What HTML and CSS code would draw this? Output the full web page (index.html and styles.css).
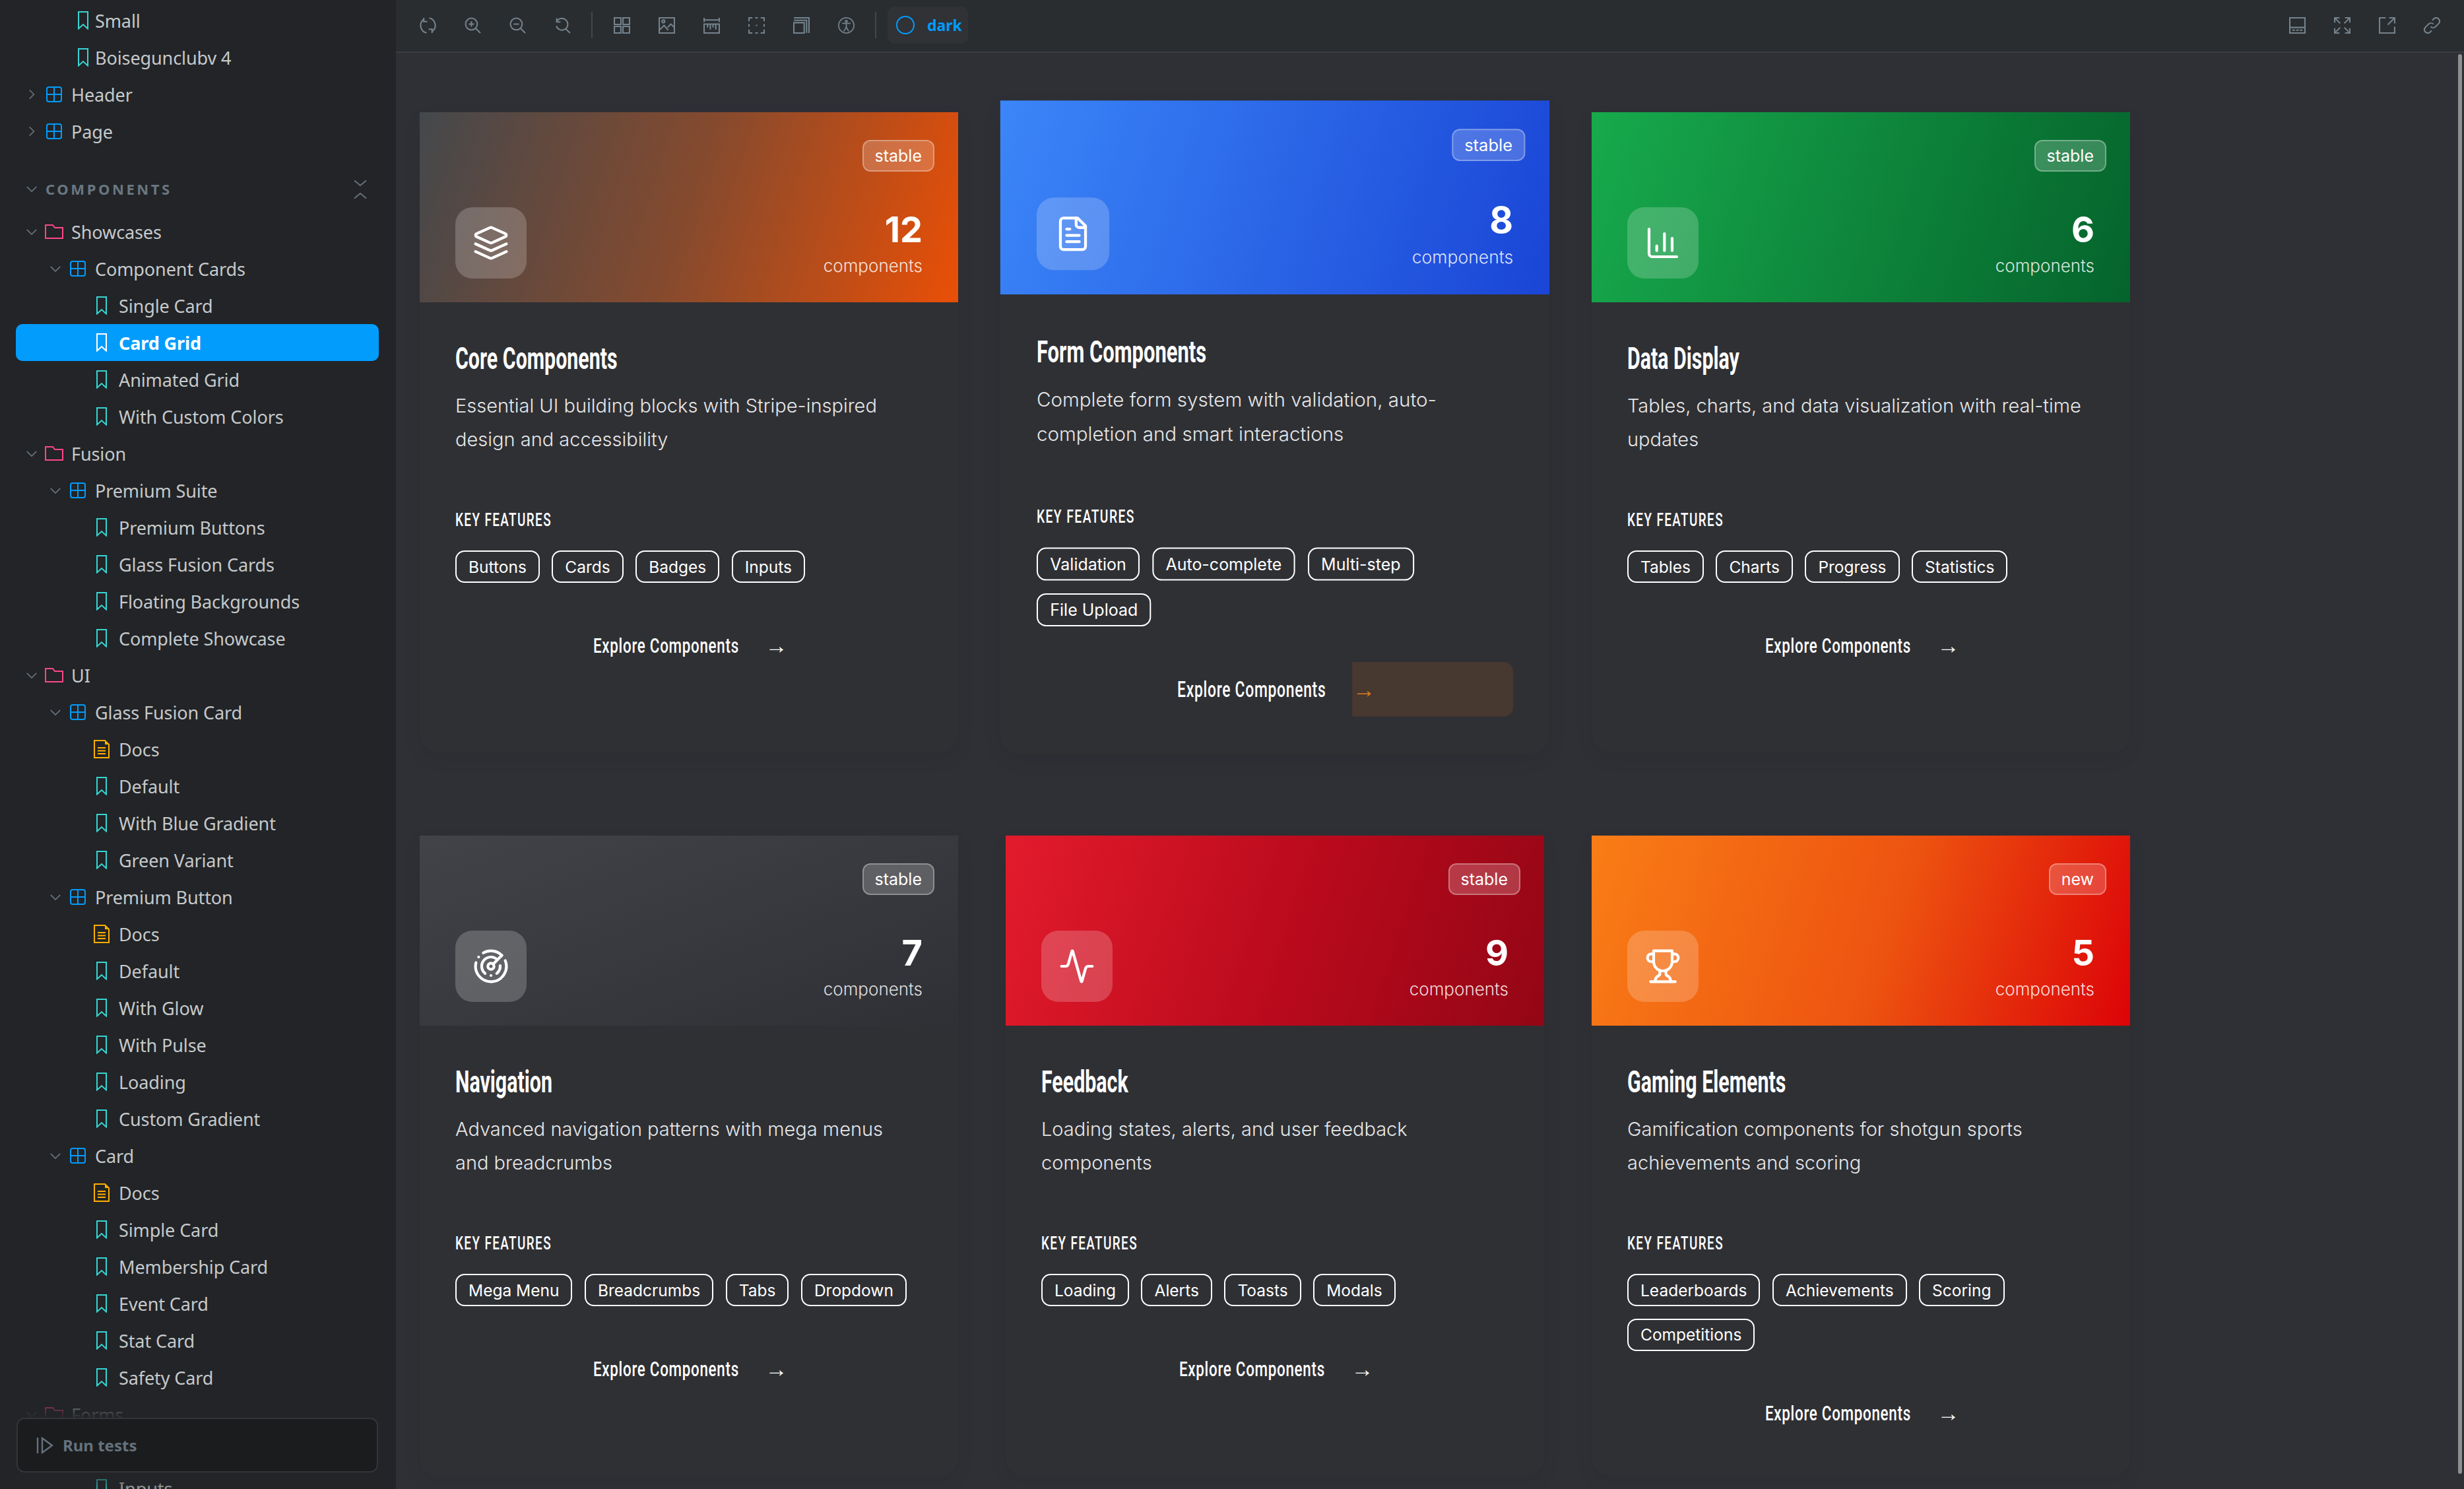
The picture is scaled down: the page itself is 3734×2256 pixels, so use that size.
FILE: index.html
```html
<!DOCTYPE html>
<html lang="en">
<head>
<meta charset="utf-8">
<title>Component Cards / Card Grid</title>
<link rel="stylesheet" href="styles.css">
</head>
<body>
<svg class="defs" aria-hidden="true">
  <symbol id="bm" viewBox="0 0 16 28"><path d="M1 1H15V26.500L8 20L1 26.500Z" fill="none" stroke="currentColor" stroke-width="2"/></symbol>
  <symbol id="cmp" viewBox="0 0 24 24"><path d="M4 1H20Q23 1 23 4V20Q23 23 20 23H4Q1 23 1 20V4Q1 1 4 1ZM12 1V23M1 12H23" fill="none" stroke="currentColor" stroke-width="2"/></symbol>
  <symbol id="fld" viewBox="0 0 28 22"><path d="M1 1H12L15 5H27V21H1Z" fill="none" stroke="currentColor" stroke-width="2"/></symbol>
  <symbol id="doc" viewBox="0 0 24 28"><path d="M1 1H17L23 7V27H1Z" fill="none" stroke="currentColor" stroke-width="2"/><path d="M17 1L23 7H17Z" fill="currentColor"/><path d="M6 12H18M6 16.500H18M6 21H18" fill="none" stroke="currentColor" stroke-width="2"/></symbol>
  <symbol id="chr" viewBox="0 0 12 20"><path d="M2 2L10 10L2 18" fill="none" stroke="currentColor" stroke-width="2"/></symbol>
  <symbol id="chd" viewBox="0 0 20 12"><path d="M2 2L10 10L18 2" fill="none" stroke="currentColor" stroke-width="2"/></symbol>
</svg>
<div class="app">
  <aside class="sidebar">
    <div class="tree">
      <div class="row d1"><svg class="ic bm"><use href="#bm"/></svg><span>Small</span></div>
      <div class="row d1"><svg class="ic bm"><use href="#bm"/></svg><span>Boisegunclubv 4</span></div>
      <div class="row d0"><svg class="chev-r"><use href="#chr"/></svg><svg class="ic cmp"><use href="#cmp"/></svg><span>Header</span></div>
      <div class="row d0"><svg class="chev-r"><use href="#chr"/></svg><svg class="ic cmp"><use href="#cmp"/></svg><span>Page</span></div>
      <div class="section">
        <svg class="chev-d"><use href="#chd"/></svg><span class="section-name">COMPONENTS</span>
        <svg class="expand" viewBox="0 0 20 30"><path d="M1 1.500L10 9L19 1.500M1 28.500L10 21L19 28.500" fill="none" stroke="currentColor" stroke-width="2"/></svg>
      </div>
      <div class="row d0"><svg class="chev-d"><use href="#chd"/></svg><svg class="ic fld"><use href="#fld"/></svg><span>Showcases</span></div>
      <div class="row d1"><svg class="chev-d"><use href="#chd"/></svg><svg class="ic cmp"><use href="#cmp"/></svg><span>Component Cards</span></div>
      <div class="row d2"><svg class="ic bm"><use href="#bm"/></svg><span>Single Card</span></div>
      <div class="row d2 active"><svg class="ic bm"><use href="#bm"/></svg><span>Card Grid</span></div>
      <div class="row d2"><svg class="ic bm"><use href="#bm"/></svg><span>Animated Grid</span></div>
      <div class="row d2"><svg class="ic bm"><use href="#bm"/></svg><span>With Custom Colors</span></div>
      <div class="row d0"><svg class="chev-d"><use href="#chd"/></svg><svg class="ic fld"><use href="#fld"/></svg><span>Fusion</span></div>
      <div class="row d1"><svg class="chev-d"><use href="#chd"/></svg><svg class="ic cmp"><use href="#cmp"/></svg><span>Premium Suite</span></div>
      <div class="row d2"><svg class="ic bm"><use href="#bm"/></svg><span>Premium Buttons</span></div>
      <div class="row d2"><svg class="ic bm"><use href="#bm"/></svg><span>Glass Fusion Cards</span></div>
      <div class="row d2"><svg class="ic bm"><use href="#bm"/></svg><span>Floating Backgrounds</span></div>
      <div class="row d2"><svg class="ic bm"><use href="#bm"/></svg><span>Complete Showcase</span></div>
      <div class="row d0"><svg class="chev-d"><use href="#chd"/></svg><svg class="ic fld"><use href="#fld"/></svg><span>UI</span></div>
      <div class="row d1"><svg class="chev-d"><use href="#chd"/></svg><svg class="ic cmp"><use href="#cmp"/></svg><span>Glass Fusion Card</span></div>
      <div class="row d2"><svg class="ic doc"><use href="#doc"/></svg><span>Docs</span></div>
      <div class="row d2"><svg class="ic bm"><use href="#bm"/></svg><span>Default</span></div>
      <div class="row d2"><svg class="ic bm"><use href="#bm"/></svg><span>With Blue Gradient</span></div>
      <div class="row d2"><svg class="ic bm"><use href="#bm"/></svg><span>Green Variant</span></div>
      <div class="row d1"><svg class="chev-d"><use href="#chd"/></svg><svg class="ic cmp"><use href="#cmp"/></svg><span>Premium Button</span></div>
      <div class="row d2"><svg class="ic doc"><use href="#doc"/></svg><span>Docs</span></div>
      <div class="row d2"><svg class="ic bm"><use href="#bm"/></svg><span>Default</span></div>
      <div class="row d2"><svg class="ic bm"><use href="#bm"/></svg><span>With Glow</span></div>
      <div class="row d2"><svg class="ic bm"><use href="#bm"/></svg><span>With Pulse</span></div>
      <div class="row d2"><svg class="ic bm"><use href="#bm"/></svg><span>Loading</span></div>
      <div class="row d2"><svg class="ic bm"><use href="#bm"/></svg><span>Custom Gradient</span></div>
      <div class="row d1"><svg class="chev-d"><use href="#chd"/></svg><svg class="ic cmp"><use href="#cmp"/></svg><span>Card</span></div>
      <div class="row d2"><svg class="ic doc"><use href="#doc"/></svg><span>Docs</span></div>
      <div class="row d2"><svg class="ic bm"><use href="#bm"/></svg><span>Simple Card</span></div>
      <div class="row d2"><svg class="ic bm"><use href="#bm"/></svg><span>Membership Card</span></div>
      <div class="row d2"><svg class="ic bm"><use href="#bm"/></svg><span>Event Card</span></div>
      <div class="row d2"><svg class="ic bm"><use href="#bm"/></svg><span>Stat Card</span></div>
      <div class="row d2"><svg class="ic bm"><use href="#bm"/></svg><span>Safety Card</span></div>
      <div class="row d0"><svg class="chev-d"><use href="#chd"/></svg><svg class="ic fld"><use href="#fld"/></svg><span>Forms</span></div>
      <div class="row d1"></div>
      <div class="row d2"><svg class="ic bm"><use href="#bm"/></svg><span>Inputs</span></div>
    </div>
    <div class="run-wrap">
      <div class="run">
        <svg class="run-ic" viewBox="0 0 26 28"><path d="M2 2V26M9 3L24 14L9 25Z" fill="none" stroke="currentColor" stroke-width="2.400"/></svg>
        <span>Run tests</span>
      </div>
    </div>
  </aside>

  <main class="main">
    <header class="toolbar">
      <div class="tool"><svg viewBox="0 0 24 24"><path d="M6 1V6.500H11M18 23V17.500H13M5.500 3.500A11 11 0 0 0 10 22.800M18.500 20.500A11 11 0 0 0 14 1.200"/></svg></div>
      <div class="tool"><svg viewBox="0 0 24 24"><circle cx="10" cy="10" r="8.500"/><path d="M16 16L23 23M10 6V14M6 10H14"/></svg></div>
      <div class="tool"><svg viewBox="0 0 24 24"><circle cx="10" cy="10" r="8.500"/><path d="M16 16L23 23M6 10H14"/></svg></div>
      <div class="tool"><svg viewBox="0 0 24 24"><path d="M3.500 1.500V7H9M3.500 6.500A8.500 8.500 0 1 1 3 13M16 16.500L23 23"/></svg></div>
      <div class="sep"></div>
      <div class="tool"><svg viewBox="0 0 24 24"><path d="M1 1H10.500V10.500H1ZM13.500 1H23V10.500H13.500ZM1 13.500H10.500V23H1ZM13.500 13.500H23V23H13.500Z"/></svg></div>
      <div class="tool"><svg viewBox="0 0 24 24"><path d="M1 1H23V23H1ZM1 19L8 12L14 19M13 15L18 10L23 15"/><circle cx="7" cy="6" r="2"/></svg></div>
      <div class="tool"><svg viewBox="0 0 24 24"><path d="M1 1V7M23 1V7M1 4H23M1 10H23V23H1ZM6 10V15M10 10V18M14 10V15M18 10V18"/></svg></div>
      <div class="tool"><svg viewBox="0 0 24 24"><path d="M1 6V1H6M18 1H23V6M1 10V14M23 10V14M1 18V23H6M18 23H23V18M10 1H14M10 23H14M11 12H13"/></svg></div>
      <div class="tool"><svg viewBox="0 0 24 24"><path d="M1 8H16V23H1ZM1 4.500H19.500V23M1 1H23V23"/></svg></div>
      <div class="tool"><svg viewBox="0 0 28 28"><circle cx="14" cy="14" r="13"/><circle cx="14" cy="7" r="1.500"/><path d="M7 10.500H21M14 11V17M14 17L10 24M14 17L18 24"/></svg></div>
      <div class="sep"></div>
      <div class="theme"><svg class="theme-ic" viewBox="0 0 28 28"><circle cx="14" cy="14" r="13"/></svg><span>dark</span></div>
      <div class="tool-right">
        <div class="tool"><svg viewBox="0 0 24 24"><path d="M1 1H23V23H1ZM1 15H23M4.500 19H8.500M10 19H14M15.500 19H19.500"/></svg></div>
        <div class="tool"><svg viewBox="0 0 24 24"><path d="M1 8V1H8M16 1H23V8M23 16V23H16M8 23H1V16M1 1L9 9M23 1L15 9M23 23L15 15M1 23L9 15"/></svg></div>
        <div class="tool"><svg viewBox="0 0 24 24"><path d="M10 1H1V23H23V14M13 11L23 1M15 1H23V9"/></svg></div>
        <div class="tool"><svg viewBox="0 0 24 24"><path d="M10 14A5 5 0 0 0 17 14L22 9A5 5 0 0 0 15 2L12.500 4.500M14 10A5 5 0 0 0 7 10L2 15A5 5 0 0 0 9 22L11.500 19.500"/></svg></div>
      </div>
    </header>

    <section class="canvas">
      <div class="grid">

        <article class="card">
          <div class="hero hero-core">
            <span class="badge">stable</span>
            <div class="hero-icon"><svg viewBox="0 0 24 24"><path d="m12.830 2.180a2 2 0 0 0-1.660 0L2.600 6.080a1 1 0 0 0 0 1.830l8.580 3.910a2 2 0 0 0 1.660 0l8.580-3.900a1 1 0 0 0 0-1.830Z"/><path d="m22 17.650-9.170 4.160a2 2 0 0 1-1.660 0L2 17.650"/><path d="m22 12.650-9.170 4.160a2 2 0 0 1-1.660 0L2 12.650"/></svg></div>
            <div class="stat"><div class="stat-num">12</div><div class="stat-label">components</div></div>
          </div>
          <div class="body">
            <h3 class="title">Core Components</h3>
            <p class="desc">Essential UI building blocks with Stripe-inspired design and accessibility</p>
            <div class="features-label">KEY FEATURES</div>
            <div class="tags"><span class="tag">Buttons</span><span class="tag">Cards</span><span class="tag">Badges</span><span class="tag">Inputs</span></div>
            <div class="explore"><span class="explore-text">Explore Components</span><span class="arrow">→</span></div>
          </div>
        </article>

        <article class="card card-hover">
          <div class="hero hero-form">
            <span class="badge">stable</span>
            <div class="hero-icon"><svg viewBox="0 0 24 24"><path d="M15 2H6a2 2 0 0 0-2 2v16a2 2 0 0 0 2 2h12a2 2 0 0 0 2-2V7Z"/><path d="M14 2v4a2 2 0 0 0 2 2h4"/><path d="M10 9H8"/><path d="M16 13H8"/><path d="M16 17H8"/></svg></div>
            <div class="stat"><div class="stat-num">8</div><div class="stat-label">components</div></div>
          </div>
          <div class="body">
            <h3 class="title">Form Components</h3>
            <p class="desc">Complete form system with validation, auto-completion and smart interactions</p>
            <div class="features-label">KEY FEATURES</div>
            <div class="tags"><span class="tag">Validation</span><span class="tag">Auto-complete</span><span class="tag">Multi-step</span><span class="tag">File Upload</span></div>
            <div class="explore"><span class="explore-text">Explore Components</span><span class="arrow arrow-hot">→</span></div>
          </div>
        </article>

        <article class="card">
          <div class="hero hero-data">
            <span class="badge">stable</span>
            <div class="hero-icon"><svg viewBox="0 0 24 24"><path d="M3 3v16a2 2 0 0 0 2 2h16"/><path d="M8 17v-3"/><path d="M13 17V6"/><path d="M18 17V9"/></svg></div>
            <div class="stat"><div class="stat-num">6</div><div class="stat-label">components</div></div>
          </div>
          <div class="body">
            <h3 class="title">Data Display</h3>
            <p class="desc">Tables, charts, and data visualization with real-time updates</p>
            <div class="features-label">KEY FEATURES</div>
            <div class="tags"><span class="tag">Tables</span><span class="tag">Charts</span><span class="tag">Progress</span><span class="tag">Statistics</span></div>
            <div class="explore"><span class="explore-text">Explore Components</span><span class="arrow">→</span></div>
          </div>
        </article>

        <article class="card">
          <div class="hero hero-nav">
            <span class="badge">stable</span>
            <div class="hero-icon"><svg viewBox="0 0 24 24"><path d="M19.070 4.930A10 10 0 0 0 6.990 3.340"/><path d="M4 6h.01"/><path d="M2.290 9.620A10 10 0 1 0 21.310 8.350"/><path d="M16.240 7.760A6 6 0 1 0 8.230 16.670"/><path d="M12 18h.01"/><path d="M17.990 11.660A6 6 0 0 1 15.770 16.670"/><circle cx="12" cy="12" r="2"/><path d="m13.410 10.590 5.660-5.660"/></svg></div>
            <div class="stat"><div class="stat-num">7</div><div class="stat-label">components</div></div>
          </div>
          <div class="body">
            <h3 class="title">Navigation</h3>
            <p class="desc">Advanced navigation patterns with mega menus and breadcrumbs</p>
            <div class="features-label">KEY FEATURES</div>
            <div class="tags"><span class="tag">Mega Menu</span><span class="tag">Breadcrumbs</span><span class="tag">Tabs</span><span class="tag">Dropdown</span></div>
            <div class="explore"><span class="explore-text">Explore Components</span><span class="arrow">→</span></div>
          </div>
        </article>

        <article class="card">
          <div class="hero hero-feedback">
            <span class="badge">stable</span>
            <div class="hero-icon"><svg viewBox="0 0 24 24"><path d="M22 12h-2.480a2 2 0 0 0-1.930 1.460l-2.350 8.360a.25.25 0 0 1-.48 0L9.240 2.180a.25.25 0 0 0-.48 0l-2.350 8.360A2 2 0 0 1 4.490 12H2"/></svg></div>
            <div class="stat"><div class="stat-num">9</div><div class="stat-label">components</div></div>
          </div>
          <div class="body">
            <h3 class="title">Feedback</h3>
            <p class="desc">Loading states, alerts, and user feedback components</p>
            <div class="features-label">KEY FEATURES</div>
            <div class="tags"><span class="tag">Loading</span><span class="tag">Alerts</span><span class="tag">Toasts</span><span class="tag">Modals</span></div>
            <div class="explore"><span class="explore-text">Explore Components</span><span class="arrow">→</span></div>
          </div>
        </article>

        <article class="card">
          <div class="hero hero-gaming">
            <span class="badge">new</span>
            <div class="hero-icon"><svg viewBox="0 0 24 24"><path d="M6 9H4.500a2.500 2.500 0 0 1 0-5H6"/><path d="M18 9h1.500a2.500 2.500 0 0 0 0-5H18"/><path d="M4 22h16"/><path d="M10 14.660V17c0 .55-.47.98-.97 1.210C7.850 18.750 7 20.240 7 22"/><path d="M14 14.660V17c0 .55.47.98.97 1.210C16.150 18.750 17 20.240 17 22"/><path d="M18 2H6v7a6 6 0 0 0 12 0V2Z"/></svg></div>
            <div class="stat"><div class="stat-num">5</div><div class="stat-label">components</div></div>
          </div>
          <div class="body">
            <h3 class="title">Gaming Elements</h3>
            <p class="desc">Gamification components for shotgun sports achievements and scoring</p>
            <div class="features-label">KEY FEATURES</div>
            <div class="tags"><span class="tag">Leaderboards</span><span class="tag">Achievements</span><span class="tag">Scoring</span><span class="tag">Competitions</span></div>
            <div class="explore"><span class="explore-text">Explore Components</span><span class="arrow">→</span></div>
          </div>
        </article>

      </div>
      <div class="scrollbar"></div>
    </section>
  </main>
</div>
</body>
</html>
```
FILE: styles.css
```css
* { box-sizing: border-box; }
html, body { margin: 0; height: 100%; }
body {
  background: #2f3035;
  color: #fff;
  font-family: "Noto Sans", sans-serif;
  overflow: hidden;
}
.defs { display: none; }
.app { display: flex; height: 2256px; }

/* Sidebar */
.sidebar {
  position: relative;
  width: 600px;
  flex: none;
  background: #222427;
  overflow: hidden;
}
.tree { padding: 3px 26px 0 24px; }
.row {
  position: relative;
  display: flex;
  align-items: center;
  height: 56px;
  font-size: 27px;
  letter-spacing: -.1px;
  color: #c6c9cb;
  border-radius: 10px;
  white-space: nowrap;
}
.row.d0 { padding-left: 84px; }
.row.d1 { padding-left: 120px; }
.row.d2 { padding-left: 156px; }
.row.active {
  background: #029cfd;
  color: #fff;
  font-weight: 700;
}
.row.active .bm { color: #fff; }
.ic { position: absolute; display: block; }
.bm { width: 16px; height: 28px; color: #37d5d3; }
.d1 .bm { left: 94px; }
.d2 .bm { left: 122px; }
.cmp { width: 24px; height: 24px; color: #029cfd; }
.d0 .cmp { left: 46px; }
.d1 .cmp { left: 82px; }
.fld { width: 28px; height: 22px; left: 44px; color: #ff4785; }
.doc { width: 24px; height: 28px; left: 118px; color: #ffae00; }
.chev-r { position: absolute; left: 19px; width: 10px; height: 18px; color: #66727c; }
.chev-d { position: absolute; width: 18px; height: 11px; color: #66727c; }
.d0 .chev-d { left: 15px; }
.d1 .chev-d { left: 51px; }
.section {
  position: relative;
  display: flex;
  align-items: center;
  height: 58px;
  margin: 30px 0 8px;
  padding-left: 45px;
}
.section .chev-d { left: 15px; }
.section-name {
  font-size: 22px;
  font-weight: 700;
  letter-spacing: 3.6px;
  color: #6a7781;
}
.expand { position: absolute; left: 512px; top: 15px; width: 20px; height: 30px; color: #66727c; }
.run-wrap {
  position: absolute;
  left: 0;
  right: 0;
  bottom: 0;
  padding: 42px 27px 25px 25px;
  background: linear-gradient(to bottom, rgba(34,36,39,0) 0, rgba(34,36,39,.92) 40px, rgba(34,36,39,.92) 120px, rgba(34,36,39,.3) 148px);
}
.run {
  display: flex;
  align-items: center;
  gap: 14px;
  height: 83px;
  padding-left: 28px;
  background: #1b1c1e;
  border: 2px solid #333639;
  border-radius: 12px;
  font-size: 24px;
  font-weight: 700;
  color: #64727e;
}
.run-ic { width: 26px; height: 28px; color: #64727e; }

/* Toolbar */
.main { flex: 1; min-width: 0; display: flex; flex-direction: column; }
.toolbar {
  display: flex;
  align-items: center;
  flex: none;
  height: 80px;
  padding: 0 15px 2px 14px;
  background: #2a2d30;
  border-bottom: 2px solid #3b3d40;
}
.tool { width: 68px; height: 56px; display: flex; align-items: center; justify-content: center; flex: none; }
.tool svg { width: 25px; height: 25px; fill: none; stroke: #73828c; stroke-width: 2; }
.sep { width: 2px; height: 40px; background: #44474a; margin: 0 10px; flex: none; }
.theme {
  display: flex;
  align-items: center;
  gap: 19px;
  width: 122px;
  height: 56px;
  margin-left: 7px;
  padding-left: 13px;
  border-radius: 10px;
  background: #303236;
  font-size: 23px;
  font-weight: 700;
  color: #029cfd;
}
.theme-ic { width: 28px; height: 28px; fill: none; stroke: #029cfd; stroke-width: 2; flex: none; }
.tool-right { margin-left: auto; display: flex; }

/* Canvas and grid */
.canvas { position: relative; flex: 1; overflow: hidden; padding: 90px 36px 0; }
.scrollbar {
  position: absolute;
  right: 3px;
  top: 2px;
  bottom: 23px;
  width: 6px;
  border-radius: 3px;
  background: #8e8f91;
}
.grid {
  display: grid;
  grid-template-columns: repeat(3, 816px);
  grid-auto-rows: 970px;
  column-gap: 72px;
  row-gap: 126px;
}
.card {
  display: flex;
  flex-direction: column;
  background: #2f3034;
  border-radius: 0 0 28px 28px;
  box-shadow: 0 10px 30px rgba(0,0,0,.06);
}
.card-hover { transform: translateY(-8px) scale(1.02); }

/* Card hero */
.hero {
  position: relative;
  display: flex;
  align-items: flex-end;
  justify-content: space-between;
  flex: none;
  height: 288px;
  padding: 0 54px 36px 54px;
}
.hero-core { background: linear-gradient(108deg, #44484c 0, #854a2e 50%, #ea4f06 100%); }
.hero-form { background: linear-gradient(108deg, #3b86f8, #1a45d6); }
.hero-data { background: linear-gradient(108deg, #17aa4c, #05632c); }
.hero-nav { background: linear-gradient(160deg, #414348, #2f3035); }
.hero-feedback { background: linear-gradient(108deg, #e31b2c 0, #b80a1c 55%, #930615 100%); }
.hero-gaming { background: linear-gradient(108deg, #f97d16 0, #ed5310 55%, #dc0308 100%); }
.badge {
  position: absolute;
  top: 42px;
  right: 36px;
  height: 48px;
  padding: 0 17px;
  display: flex;
  align-items: center;
  font-family: "Inter", sans-serif;
  font-size: 25px;
  font-weight: 400;
  background: rgba(255,255,255,.2);
  border: 2px solid rgba(255,255,255,.3);
  border-radius: 12px;
}
.hero-icon {
  width: 108px;
  height: 108px;
  border-radius: 26px;
  background: rgba(255,255,255,.2);
  display: flex;
  align-items: center;
  justify-content: center;
}
.hero-icon svg { width: 56px; height: 56px; fill: none; stroke: #fff; stroke-width: 1.8; stroke-linecap: round; stroke-linejoin: round; }
.stat { text-align: right; }
.stat-num { font-family: "Inter", sans-serif; font-size: 54px; font-weight: 700; line-height: 60px; margin-bottom: 6px; }
.stat-label { font-family: "Inter", sans-serif; font-size: 26px; font-weight: 300; line-height: 38px; color: rgba(255,255,255,.85); }

/* Card body */
.body { flex: 1; padding: 59px 54px 54px; display: flex; flex-direction: column; }
.title, .features-label, .explore-text {
  font-family: "Roboto", sans-serif;
  font-weight: 700;
  white-space: nowrap;
  transform-origin: left center;
}
.title { margin: 0; font-size: 46px; line-height: 52px; font-weight: 700; transform: scaleX(.66); }
.desc {
  margin: 20px 0 0;
  max-width: 695px;
  font-family: "Inter", sans-serif;
  font-size: 29px;
  font-weight: 300;
  line-height: 51px;
  color: #e6e7e8;
  height: 102px;
}
.features-label { margin-top: 82px; font-size: 27px; font-weight: 500; line-height: 30px; letter-spacing: 2px; transform: scaleX(.7); }
.tags { display: flex; flex-wrap: wrap; gap: 18.500px; margin-top: 31px; }
.tag {
  height: 49px;
  padding: 0 18px;
  display: flex;
  align-items: center;
  font-family: "Inter", sans-serif;
  font-size: 24.500px;
  font-weight: 400;
  border: 2px solid #fff;
  border-radius: 14px;
  white-space: nowrap;
}
.explore {
  display: flex;
  align-items: center;
  justify-content: center;
  height: 81px;
  margin-top: 54px;
}
.explore-text { flex: none; width: 222px; font-size: 32px; font-weight: 500; letter-spacing: 1px; transform: scaleX(.7); }
.arrow {
  position: relative;
  flex: none;
  width: 30px;
  margin: 0 0 0 39px;
  font-family: "Liberation Sans", sans-serif;
  font-size: 34px;
  line-height: 20px;
}
.arrow-hot { color: #d97d1e; }
.arrow-hot::before {
  content: "";
  position: absolute;
  left: -1px;
  top: -31px;
  width: 239px;
  height: 81px;
  border-radius: 0 14px 14px 0;
  background: rgba(249,115,22,.12);
}
```
